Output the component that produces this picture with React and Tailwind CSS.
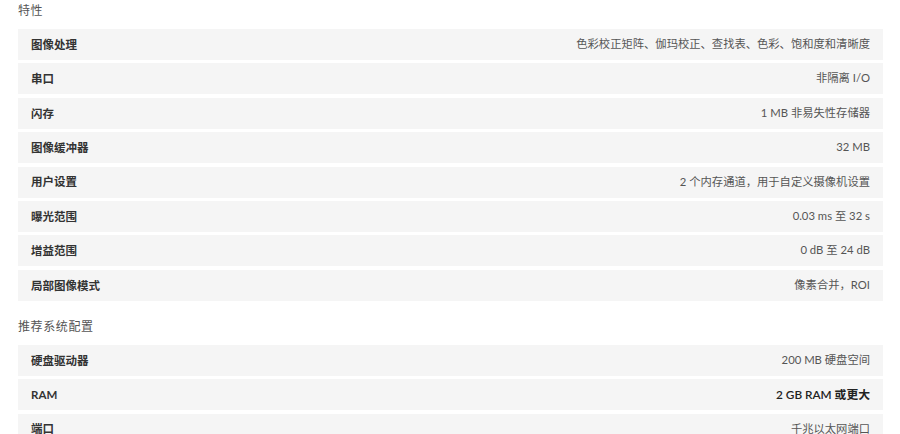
const features = [
  ['图像处理', '色彩校正矩阵、伽玛校正、查找表、色彩、饱和度和清晰度'],
  ['串口', '非隔离 I/O'],
  ['闪存', '1 MB 非易失性存储器'],
  ['图像缓冲器', '32 MB'],
  ['用户设置', '2 个内存通道，用于自定义摄像机设置'],
  ['曝光范围', '0.03 ms 至 32 s'],
  ['增益范围', '0 dB 至 24 dB'],
  ['局部图像模式', '像素合并，ROI'],
];

const system = [
  ['硬盘驱动器', '200 MB 硬盘空间'],
  ['RAM', '2 GB RAM 或更大', true],
  ['端口', '千兆以太网端口'],
];

const SpecRow = ({ label, value, strong }) => (
  <div className="flex h-[31px] items-center justify-between bg-[#f5f5f5] px-[13px] text-[11.5px]">
    <span className="font-bold text-[#333]">{label}</span>
    <span className={strong ? 'font-semibold text-[#222] text-[11.8px]' : 'text-[#555] text-[11.3px]'}>{value}</span>
  </div>
);

const Section = ({ title, rows }) => (
  <section>
    <h3 className="text-[12px] leading-[22px] tracking-[0.6px] text-[#555]">{title}</h3>
    <div className="mt-[7px] flex flex-col gap-[3.4px]">
      {rows.map(([label, value, strong]) => (
        <SpecRow key={label} label={label} value={value} strong={strong} />
      ))}
    </div>
  </section>
);

export default function App() {
  return (
    <div
      className="h-[434px] overflow-hidden bg-white pl-[18px] pr-[17px]"
      style={{ fontFamily: 'Lato, "Noto Sans CJK SC", sans-serif' }}
    >
      <div className="flex flex-col gap-[15px]">
        <Section title="特性" rows={features} />
        <Section title="推荐系统配置" rows={system} />
      </div>
    </div>
  );
}
